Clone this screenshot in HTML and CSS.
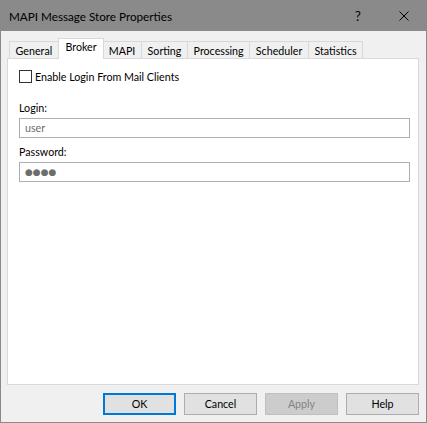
FILE: index.html
```html
<!DOCTYPE html>
<html>
<head>
<meta charset="utf-8">
<link rel="stylesheet" href="styles.css">
</head>
<body>
<div class="window">
  <div class="titlebar">
    <span class="title">MAPI Message Store Properties</span>
    <span class="help-btn">?</span>
    <span class="close-btn">
      <svg width="10" height="10" viewBox="0 0 10 10"><path d="M0.5 0.5 L9.5 9.5 M9.5 0.5 L0.5 9.5" stroke="#000" stroke-width="1" fill="none"/></svg>
    </span>
  </div>
  <div class="client">
    <div class="tabs">
      <div class="tab first">General</div>
      <div class="tab active">Broker</div>
      <div class="tab">MAPI</div>
      <div class="tab">Sorting</div>
      <div class="tab">Processing</div>
      <div class="tab">Scheduler</div>
      <div class="tab">Statistics</div>
    </div>
    <div class="panel">
      <label class="check-row">
        <span class="checkbox"></span>
        <span>Enable Login From Mail Clients</span>
      </label>
      <div class="field-label login-label">Login:</div>
      <div class="input muted">user</div>
      <div class="field-label">Password:</div>
      <div class="input dots">●●●●</div>
    </div>
    <div class="buttons">
      <div class="btn default">OK</div>
      <div class="btn">Cancel</div>
      <div class="btn disabled">Apply</div>
      <div class="btn">Help</div>
    </div>
  </div>
</div>
</body>
</html>
```

FILE: styles.css
```css
html, body {
  margin: 0;
  padding: 0;
  background: #f0f0f0;
}
body {
  font-family: Lato, "Liberation Sans", sans-serif;
  font-size: 10.7px;
  color: #000;
}
.window {
  width: 427px;
  height: 423px;
  box-sizing: border-box;
  border: 1px solid #8a8a8a;
  border-top: none;
  background: #f0f0f0;
  display: flex;
  flex-direction: column;
}
.titlebar {
  height: 31px;
  background: #8a8a8a;
  display: flex;
  align-items: center;
  margin: 0 -1px;
  flex: none;
}
.title {
  margin-left: 9px;
  font-size: 11.7px;
  flex: 1;
}
.help-btn {
  width: 46px;
  text-align: center;
  font-size: 13px;
}
.close-btn {
  width: 46px;
  display: flex;
  justify-content: center;
  align-items: center;
}
.client {
  flex: 1;
  display: flex;
  flex-direction: column;
  padding: 7px 7px 7px 6px;
}
.tabs {
  display: flex;
  padding-left: 2px;
  height: 20px;
  align-items: flex-end;
  position: relative;
  z-index: 1;
}
.tab {
  height: 17px;
  box-sizing: border-box;
  border: 1px solid #d9d9d9;
  border-bottom: none;
  border-left: none;
  padding: 0 5.6px;
  line-height: 17px;
  background: #f0f0f0;
}
.tab.first {
  border-left: 1px solid #d9d9d9;
}
.tab.active {
  height: 21px;
  margin-bottom: -1px;
  background: #fff;
  border-left: 1px solid #d9d9d9;
  margin-left: -1px;
  margin-right: -1px;
  line-height: 16px;
  padding: 0 6.6px;
  z-index: 2;
}
.panel {
  flex: 1;
  background: #fff;
  border: 1px solid #d9d9d9;
  padding: 11px 8px 0 11px;
}
.check-row {
  display: flex;
  align-items: center;
  gap: 3px;
  height: 13px;
}
.checkbox {
  width: 13px;
  height: 13px;
  box-sizing: border-box;
  border: 1px solid #333;
  background: #fff;
}
.field-label {
  margin-top: 6px;
  height: 16px;
  line-height: 16px;
}
.login-label {
  margin-top: 17px;
}
.input {
  margin-top: 2px;
  height: 20px;
  box-sizing: border-box;
  border: 1px solid #adadad;
  line-height: 18px;
  padding-left: 5px;
}
.muted {
  color: #6d6d6d;
}
.dots {
  color: #6d6d6d;
  font-family: "DejaVu Sans", sans-serif;
  font-size: 9px;
  letter-spacing: 0;
}
.buttons {
  display: flex;
  justify-content: flex-end;
  gap: 8px;
  margin-top: 8px;
  height: 22px;
  flex: none;
}
.btn {
  width: 73px;
  height: 22px;
  box-sizing: border-box;
  border: 1px solid #adadad;
  background: #e1e1e1;
  text-align: center;
  line-height: 20px;
}
.btn.default {
  border: 2px solid #0078d7;
  line-height: 18px;
}
.btn.disabled {
  background: #cccccc;
  border-color: #bfbfbf;
  color: #838383;
}
```
